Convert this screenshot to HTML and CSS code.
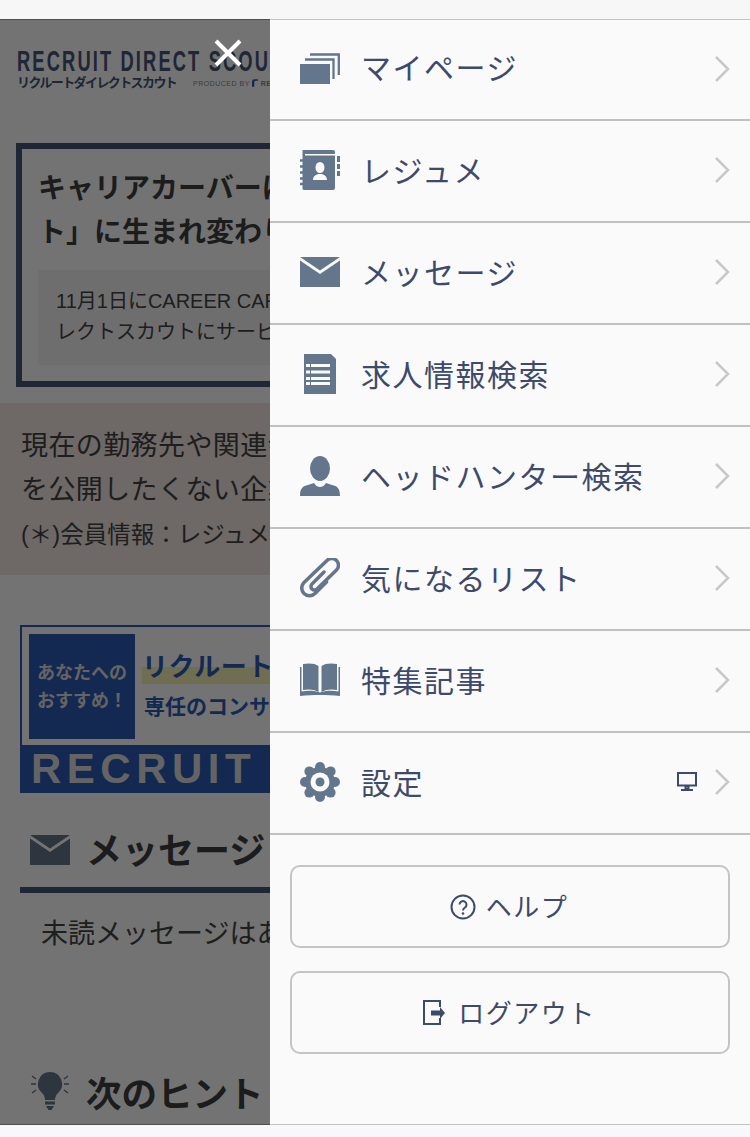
FILE: index.html
```html
<!DOCTYPE HTML>
<html lang="ja">
<head>
  <title>リクルートダイレクトスカウト</title>
  <meta name="viewport" content="width=device-width, initial-scale=1">
  <link rel="stylesheet" href="styles.css">
</head>
<body>
<div class="topbar"></div>
<div class="screen">

  <div class="page">
    <div class="logo">
      <div class="logo-main">RECRUIT DIRECT SCOUT</div>
      <div class="logo-sub">
        <span class="logo-kana">リクルートダイレクトスカウト</span>
        <span class="logo-by">PRODUCED BY
          <svg class="logo-mark" viewBox="0 0 8 10"><path d="M0 10V3a3 3 0 0 1 3-3h5v2H5a2 2 0 0 0-2 2v6z"/></svg>
          <b>RECRUIT</b></span>
      </div>
    </div>

    <div class="notice">
      <div class="notice-title">キャリアカーバーは「リクルートダイレクトスカウ<br>ト」に生まれ変わりました</div>
      <div class="notice-body">11月1日にCAREER CARVERはリクルートダイ<br>レクトスカウトにサービス名称を変更しました</div>
    </div>

    <div class="warn">
      <p>現在の勤務先や関連会社など、会員情報(*)</p>
      <p>を公開したくない企業を設定できます</p>
      <p class="warn-small">(＊)会員情報：レジュメ、氏名など</p>
    </div>

    <div class="banner">
      <div class="banner-top">
        <div class="banner-tag">あなたへの<br>おすすめ！</div>
        <div class="banner-copy">
          <div class="banner-head">リクルートエージェント</div>
          <div class="banner-sub">専任のコンサルタントが支援</div>
        </div>
      </div>
      <div class="banner-foot">RECRUIT AGENT</div>
    </div>

    <div class="sec-head">
      <svg class="sec-icon" viewBox="0 0 40 40"><path d="M0 5h40L20 18.500z"/><path d="M0 8.500l20 13.500 20-13.500V35H0z"/></svg>
      <span>メッセージ</span>
    </div>
    <div class="sec-text">未読メッセージはありません</div>

    <div class="hint-head">
      <svg class="sec-icon" viewBox="0 0 40 40">
        <path d="M20 1a12 12 0 0 0-8 21c2 2 3 4 3 7h10c0-3 1-5 3-7a12 12 0 0 0-8-21z"/>
        <path d="M15 30.500h10v3H15zM16 35h8l-2.500 4h-3z"/>
        <path class="bulb-ray" d="M1 13h5M2 5l4 3M2 22l4-3M34 13h5M38 5l-4 3M38 22l-4-3"/>
      </svg>
      <span>次のヒント</span>
    </div>

    <div class="dim"></div>
  </div>

  <svg class="close" viewBox="0 0 28 28"><path d="M2 2l24 24M26 2L2 26"/></svg>

  <div class="menu">
    <a class="row">
      <svg class="ico" viewBox="0 0 40 40">
        <path d="M0 15h30v20H0z"/>
        <path class="line" d="M5 10.500h28.500V30M10 5.500h28.800V26"/>
      </svg>
      <span class="label">マイページ</span>
      <svg class="chev" viewBox="0 0 15 26"><path d="M1 1l12 12L1 25"/></svg>
    </a>
    <a class="row">
      <svg class="ico" viewBox="0 0 40 40">
        <path d="M3.500 0H33a2 2 0 0 1 2 2v2H5v1.500h30V38a2 2 0 0 1-2 2H4a2 2 0 0 1-1.500-1V0z"/>
        <path d="M37 6h3v6h-3zM37 14h3v5h-3zM37 21h3v5h-3z"/>
        <path class="ring" d="M0 10.500h6M0 16.500h6M0 22.500h6M0 28.500h6M0 34h6"/>
        <path class="cut" d="M20 12a4.500 5.500 0 0 1 0 11 4.500 5.500 0 0 1 0-11zM13 30c0-4 3-5 5-6h4c2 1 5 2 5 6z"/>
      </svg>
      <span class="label">レジュメ</span>
      <svg class="chev" viewBox="0 0 15 26"><path d="M1 1l12 12L1 25"/></svg>
    </a>
    <a class="row">
      <svg class="ico" viewBox="0 0 40 40"><path d="M0 5h40L20 18.500z"/><path d="M0 8.500l20 13.500 20-13.500V35H0z"/></svg>
      <span class="label">メッセージ</span>
      <svg class="chev" viewBox="0 0 15 26"><path d="M1 1l12 12L1 25"/></svg>
    </a>
    <a class="row">
      <svg class="ico" viewBox="0 0 40 40">
        <path d="M4 0h27l5 5v35H4z"/>
        <path class="cut" d="M6 10h4v3H6zM11 10h19v3H11zM6 16.500h4v3H6zM11 16.500h19v3H11zM6 23h4v3H6zM11 23h19v3H11zM6 28h4v3H6zM11 28h19v3H11z"/>
      </svg>
      <span class="label">求人情報検索</span>
      <svg class="chev" viewBox="0 0 15 26"><path d="M1 1l12 12L1 25"/></svg>
    </a>
    <a class="row">
      <svg class="ico" viewBox="0 0 40 40">
        <ellipse cx="20" cy="12.500" rx="10" ry="12.500"/>
        <path d="M0 40c0-8 3-10 8-11l6-2c2 3 4 4 6 4s4-1 6-4l6 2c5 1 8 3 8 11z"/>
      </svg>
      <span class="label">ヘッドハンター検索</span>
      <svg class="chev" viewBox="0 0 15 26"><path d="M1 1l12 12L1 25"/></svg>
    </a>
    <a class="row">
      <svg class="ico" viewBox="0 0 40 40">
        <path class="clip" d="M24 14L12 26a3.400 3.400 0 0 0 5 5L36.500 12a6.600 6.600 0 0 0-9.500-9.500L4 24.500a7.600 7.600 0 0 0 11 11l11.500-11.500"/>
      </svg>
      <span class="label">気になるリスト</span>
      <svg class="chev" viewBox="0 0 15 26"><path d="M1 1l12 12L1 25"/></svg>
    </a>
    <a class="row">
      <svg class="ico" viewBox="0 0 40 40">
        <path d="M3 4c5-1 12-1 15.500 2v26C14 29 8 29 3 30zM37 4c-5-1-12-1-15.500 2v26c4.500-3 10.500-3 15.500-2z"/>
        <path d="M0 7h1.500v24.500c7-1 13-1 18.500 1 5.500-2 11.500-2 18.500-1V7H40v29c-7-1-13-1-20-1s-13 0-20 1z"/>
      </svg>
      <span class="label">特集記事</span>
      <svg class="chev" viewBox="0 0 15 26"><path d="M1 1l12 12L1 25"/></svg>
    </a>
    <a class="row">
      <svg class="ico" viewBox="0 0 40 40">
        <circle cx="20" cy="20" r="15"/>
        <circle cx="20" cy="5" r="5"/><circle cx="20" cy="35" r="5"/><circle cx="5" cy="20" r="5"/><circle cx="35" cy="20" r="5"/>
        <circle cx="9.400" cy="9.400" r="5"/><circle cx="30.600" cy="9.400" r="5"/><circle cx="9.400" cy="30.600" r="5"/><circle cx="30.600" cy="30.600" r="5"/>
        <circle class="cut" cx="20" cy="20" r="9.500"/>
        <circle cx="20" cy="20" r="4.500"/>
      </svg>
      <span class="label">設定</span>
      <svg class="pc" viewBox="0 0 20 20">
        <path d="M1 1h18v12.500H1zM8.500 14h3v2.500h-3z" fill="none" stroke="#3d4a6b" stroke-width="2"/>
        <path d="M4 17h12v2H4z" fill="#3d4a6b"/>
      </svg>
      <svg class="chev" viewBox="0 0 15 26"><path d="M1 1l12 12L1 25"/></svg>
    </a>

    <div class="buttons">
      <a class="btn">
        <svg class="btn-ico" viewBox="0 0 26 26">
          <circle cx="13" cy="13" r="11.500" class="outline"/>
          <path class="outline" d="M9.500 10.500a3.500 3.500 0 1 1 5.500 3c-1.500 1-2 1.500-2 3"/>
          <circle cx="13" cy="19.500" r="1.300" fill="#3d4a6b"/>
        </svg>
        <span class="btn-text">ヘルプ</span>
      </a>
      <a class="btn">
        <svg class="btn-ico" viewBox="0 0 26 26">
          <path class="outline" d="M18 7V1H2v23h16v-6"/>
          <path d="M9 10.500h9V7l5 6-5 6v-3.500H9z" fill="#3d4a6b"/>
        </svg>
        <span class="btn-text">ログアウト</span>
      </a>
    </div>
  </div>
</div>
<div class="bottombar"></div>
</body>
</html>
```

FILE: styles.css
```css
* {
  box-sizing: border-box;
}

body {
  margin: 0;
  font-family: "Liberation Sans", "Noto Sans CJK JP", sans-serif;
  background-color: #f8f8fa;
  color: #333;
}

p {
  margin: 0;
}

.topbar {
  height: 19px;
  background-color: #f7f7f7;
}

.bottombar {
  height: 12px;
  background-color: #f8f8fa;
}

.screen {
  position: relative;
  display: flex;
  height: 1106px;
}

/* page behind the drawer */
.page {
  position: relative;
  width: 270px;
  flex-shrink: 0;
  overflow: hidden;
  background-color: #fff;
  white-space: nowrap;
}

.dim {
  position: absolute;
  top: 0;
  left: 0;
  right: 0;
  bottom: 0;
  background-color: rgba(0, 0, 0, 0.55);
  border-top: 1px solid rgba(0, 0, 0, 0.3);
  border-bottom: 1px solid rgba(0, 0, 0, 0.3);
}

.logo {
  height: 124px;
  padding: 27px 0 0 17px;
  color: #465478;
}

.logo-main {
  font-size: 30px;
  line-height: 30px;
  font-weight: 700;
  letter-spacing: 3.500px;
  transform: scaleX(0.61);
  transform-origin: left;
}

.logo-sub {
  display: flex;
  align-items: center;
  margin-top: -2px;
}

.logo-kana {
  width: 176px;
  flex-shrink: 0;
  font-size: 13px;
  line-height: 18px;
  font-weight: 700;
  letter-spacing: -1.600px;
}

.logo-by {
  font-size: 7px;
  color: #888;
  letter-spacing: 0.5px;
}

.logo-mark {
  width: 6px;
  height: 8px;
  margin-bottom: -1px;
  fill: #2d5bb5;
}

.notice {
  margin-left: 16px;
  width: 500px;
  height: 244px;
  border: 6px solid #465478;
  padding: 18px 16px;
}

.notice-title {
  font-size: 28px;
  line-height: 44px;
  font-weight: 700;
  color: #3e3e3e;
}

.notice-body {
  margin-top: 15px;
  height: 95px;
  padding: 16px 18px;
  background-color: #f3f3f3;
  font-size: 20px;
  line-height: 31px;
  color: #444;
}

.warn {
  margin-top: 16px;
  height: 172px;
  padding: 21px 21px;
  background-color: #f3e6e5;
  font-size: 27px;
  line-height: 44px;
  letter-spacing: 0.4px;
  color: #444;
}

.warn .warn-small {
  font-size: 23.500px;
  line-height: 46px;
  letter-spacing: 0;
}

.banner {
  margin: 50px 0 0 20px;
  width: 500px;
  height: 168px;
  border: 2px solid #2d5bb5;
  background-color: #fff;
}

.banner-top {
  display: flex;
  height: 118px;
  padding: 7px;
}

.banner-tag {
  width: 106px;
  height: 105px;
  padding-top: 25px;
  background-color: #2d5bb5;
  color: #ddd;
  font-size: 18px;
  line-height: 28px;
  font-weight: 700;
  text-align: center;
}

.banner-copy {
  padding-left: 7px;
  color: #2d5bb5;
  font-weight: 700;
}

.banner-head {
  margin-top: 16px;
  font-size: 26px;
  line-height: 34px;
  letter-spacing: 0.5px;
  background-image: linear-gradient(transparent 50%, #f5f2b5 50%);
}

.banner-sub {
  margin-top: 8px;
  padding-left: 2px;
  font-size: 21px;
  line-height: 30px;
}

.banner-foot {
  height: 48px;
  padding-left: 9px;
  background-color: #2d5bb5;
  color: #ddd;
  font-size: 42px;
  line-height: 48px;
  font-weight: 700;
  letter-spacing: 5.500px;
}

.sec-head,
.hint-head {
  display: flex;
  align-items: center;
  gap: 16px;
  margin-left: 20px;
  padding-left: 10px;
  font-size: 36px;
  font-weight: 700;
  color: #3e3e3e;
}

.sec-head {
  margin-top: 20px;
  height: 80px;
  border-bottom: 6px solid #465478;
}

.sec-head span {
  margin-top: -4px;
}

.hint-head {
  margin-top: 87px;
  height: 48px;
  font-size: 35.500px;
}

.sec-icon {
  width: 40px;
  height: 40px;
  fill: #64768c;
}

.bulb-ray {
  fill: none;
  stroke: #64768c;
  stroke-width: 1.500;
}

.sec-text {
  margin-left: 41px;
  padding-top: 21px;
  height: 87px;
  font-size: 27px;
  line-height: 40px;
  color: #444;
}

.close {
  position: absolute;
  top: 20px;
  left: 214px;
  width: 28px;
  height: 28px;
  fill: none;
  stroke: #fff;
  stroke-width: 4;
}

/* drawer */
.menu {
  flex: 1;
  background-color: #fafafa;
  border-top: 1px solid #c4c4c4;
  border-bottom: 1px solid #c4c4c4;
}

.row {
  display: flex;
  align-items: center;
  height: 102px;
  padding: 0 20px 2px 30px;
  border-bottom: 2px solid #c0c0c0;
  color: #3d4a6b;
}

.row:first-child {
  height: 101px;
}

.ico {
  width: 40px;
  height: 40px;
  flex-shrink: 0;
  fill: #64768c;
}

.line {
  fill: none;
  stroke: #64768c;
  stroke-width: 2.300;
}

.ring {
  fill: none;
  stroke: #64768c;
  stroke-width: 2.400;
}

.cut {
  fill: #fafafa;
}

.clip {
  fill: none;
  stroke: #64768c;
  stroke-width: 3.500;
  stroke-linecap: round;
}

.label {
  flex: 1;
  margin-left: 21px;
  margin-top: 4px;
  font-size: 30px;
  line-height: 40px;
  letter-spacing: 1.500px;
}

.row:first-child .label {
  margin-top: 0;
}

.pc {
  width: 20px;
  height: 20px;
  margin-right: 18px;
}

.chev {
  width: 15px;
  height: 26px;
  fill: none;
  stroke: #c8c8c8;
  stroke-width: 2.500;
}

.buttons {
  display: flex;
  flex-direction: column;
  gap: 23px;
  padding: 30px 20px 0 20px;
}

.btn {
  display: flex;
  align-items: center;
  justify-content: center;
  gap: 10px;
  height: 83px;
  padding-right: 2px;
  border: 2px solid #c4c4c4;
  border-radius: 10px;
  color: #3d4a6b;
  font-size: 26px;
  letter-spacing: 1.500px;
}

.btn-text {
  margin-bottom: 3px;
}

.btn-ico {
  width: 26px;
  height: 26px;
}

.outline {
  fill: none;
  stroke: #3d4a6b;
  stroke-width: 2;
}
```
